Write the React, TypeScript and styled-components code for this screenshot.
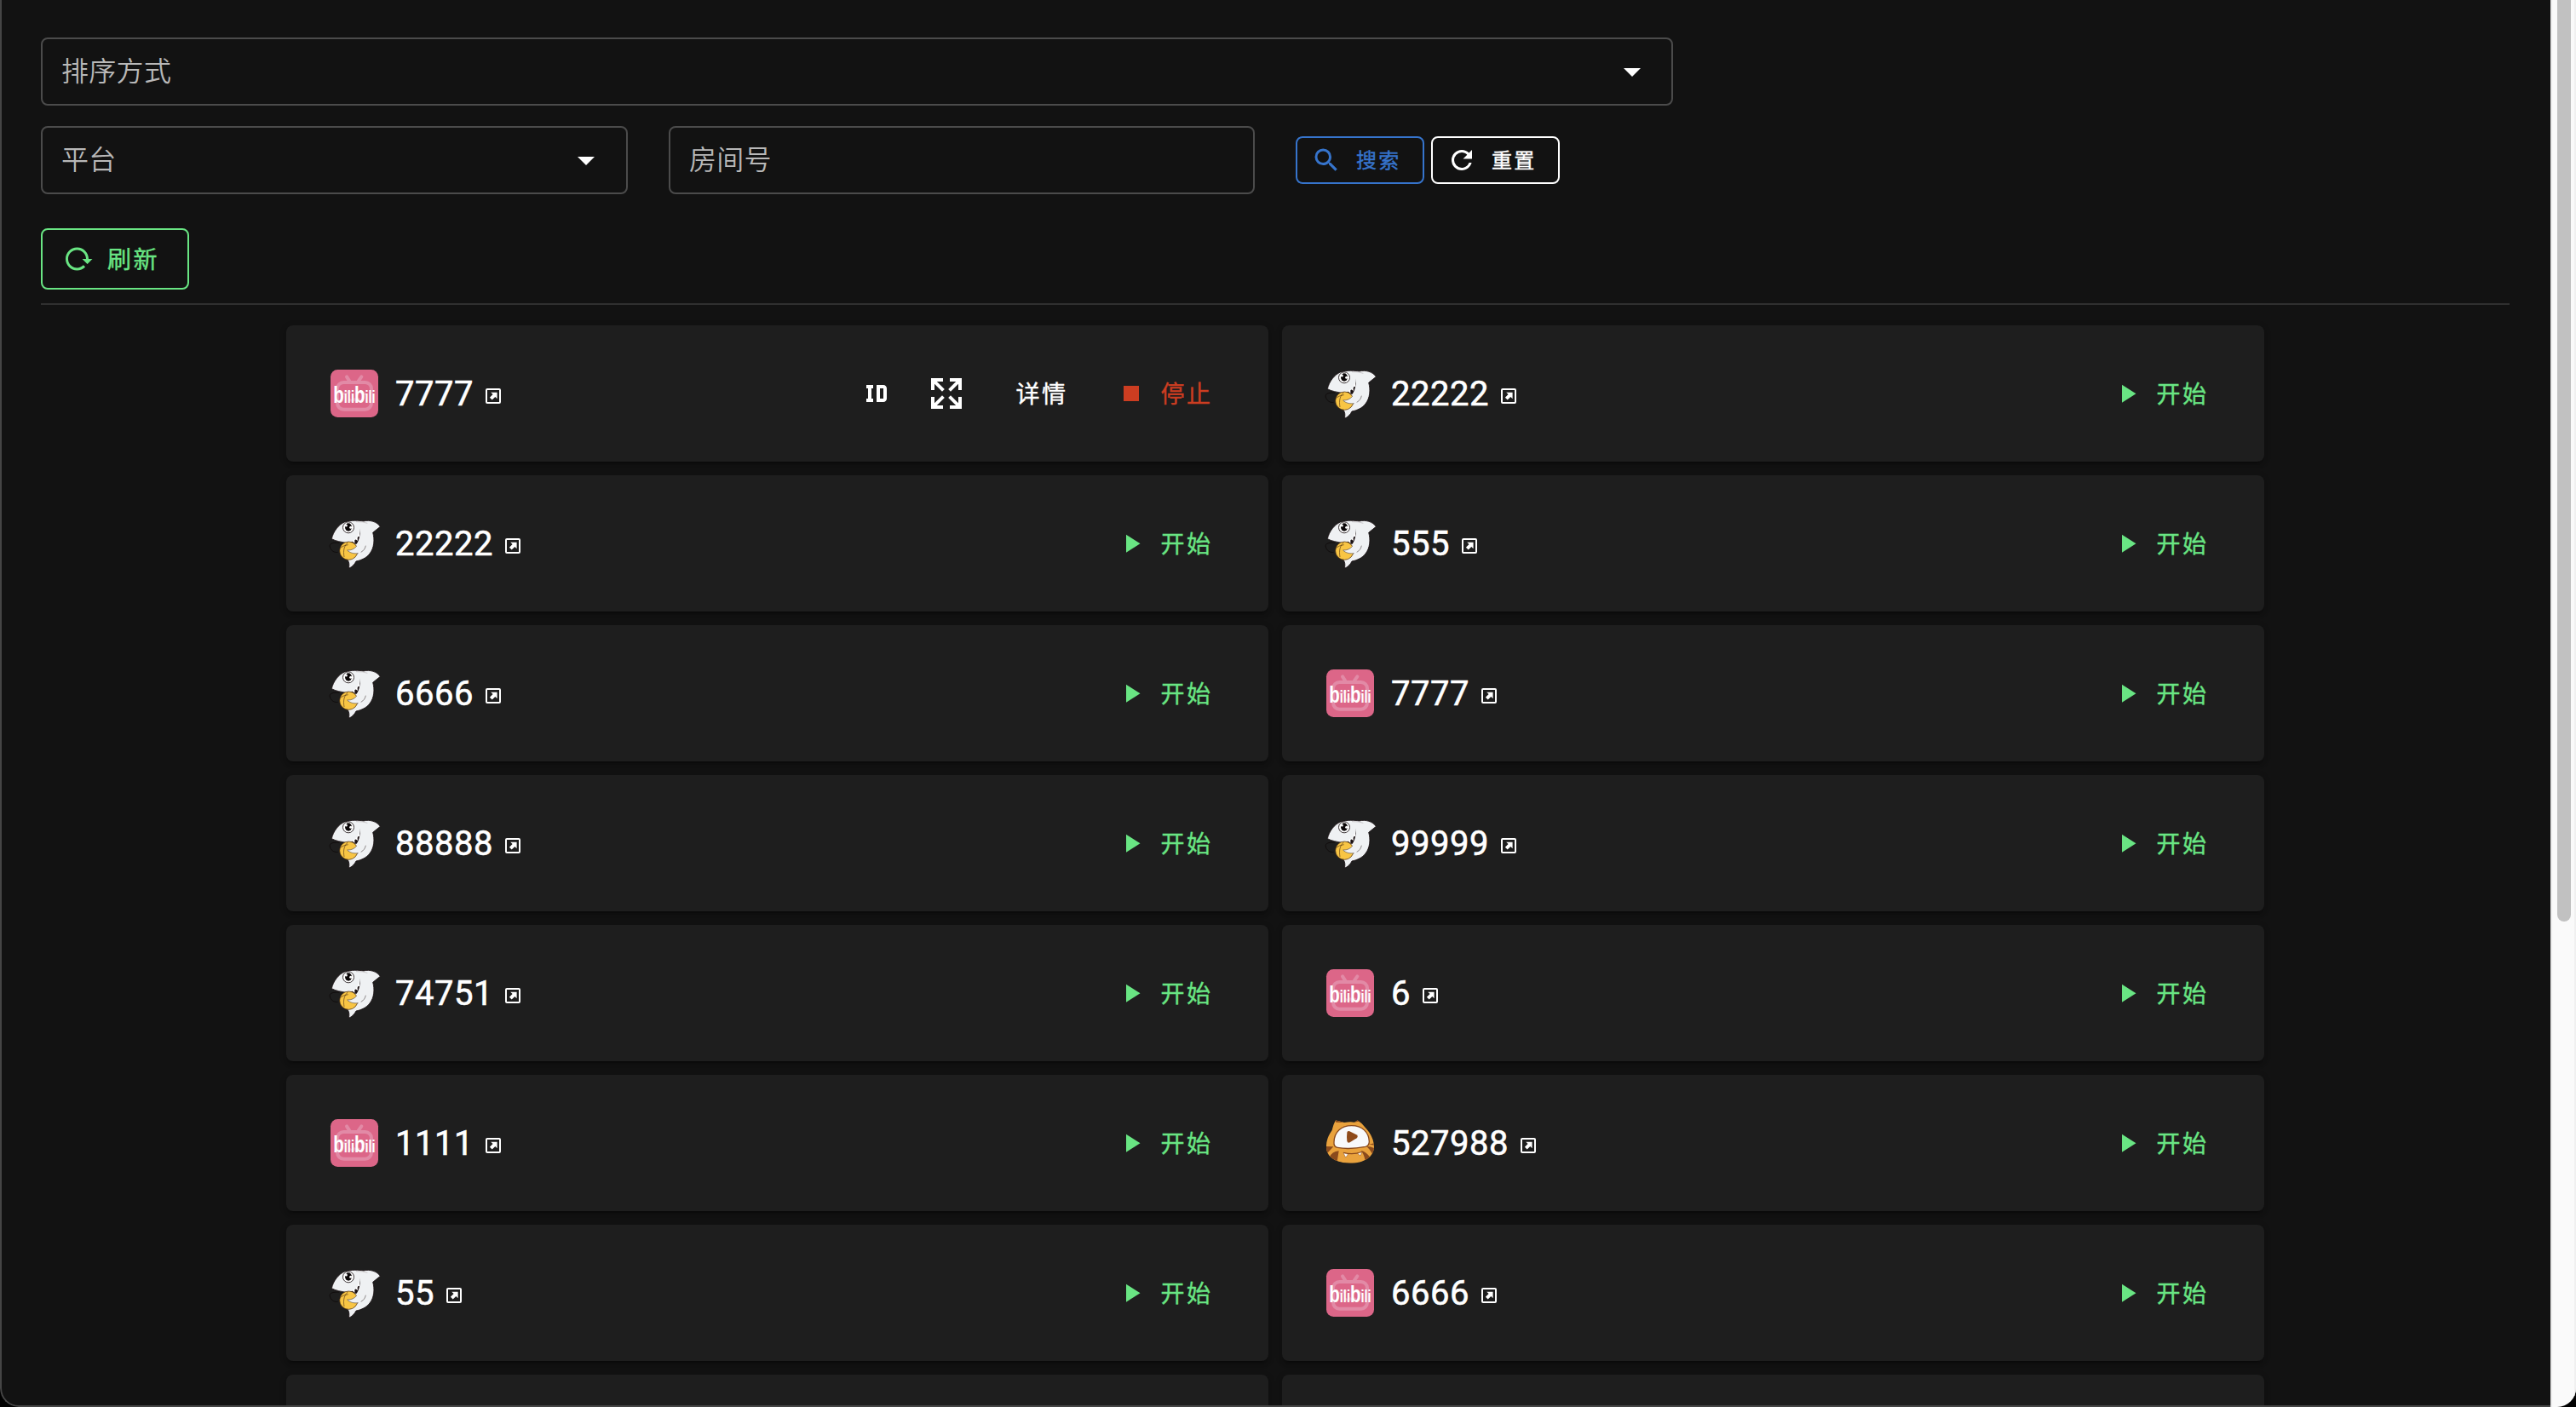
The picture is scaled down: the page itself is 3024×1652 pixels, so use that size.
import React from "react";
import styled, { createGlobalStyle } from "styled-components";

const GlobalStyle = createGlobalStyle`
  html, body, #root { height: 100%; }
  body {
    margin: 0;
    background: #000;
    overflow: hidden;
    font-family: Roboto, "Noto Sans CJK SC", sans-serif;
    color: #fff;
  }
  *, *::before, *::after { box-sizing: border-box; }
`;

const colors = {
  white: "#ffffff",
  blue: "#3674cc",
  green: "#69e583",
  red: "#cc3d21",
};

const icons = {
  magnify:
    "M9.5,3A6.5,6.5 0 0,1 16,9.5C16,11.11 15.41,12.59 14.44,13.73L14.71,14H15.5L20.5,19L19,20.5L14,15.5V14.71L13.73,14.44C12.59,15.41 11.11,16 9.5,16A6.5,6.5 0 0,1 3,9.5A6.5,6.5 0 0,1 9.5,3M9.5,5C7,5 5,7 5,9.5C5,12 7,14 9.5,14C12,14 14,12 14,9.5C14,7 12,5 9.5,5Z",
  refresh:
    "M17.65,6.35C16.2,4.9 14.21,4 12,4A8,8 0 0,0 4,12A8,8 0 0,0 12,20C15.73,20 18.84,17.45 19.73,14H17.65C16.83,16.33 14.61,18 12,18A6,6 0 0,1 6,12A6,6 0 0,1 12,6C13.66,6 15.14,6.69 16.22,7.78L13,11H20V4L17.65,6.35Z",
  reload:
    "M2 12C2 16.97 6.03 21 11 21C13.39 21 15.68 20.06 17.4 18.4L15.9 16.9C14.63 18.25 12.86 19 11 19C4.76 19 1.64 11.46 6.05 7.05C10.46 2.64 18 5.77 18 12H15L19 16H19.1L23 12H20C20 7.03 15.97 3 11 3C6.03 3 2 7.03 2 12Z",
  menuDown: "M7,10L12,15L17,10H7Z",
  identifier:
    "M10 7V9H9V15H10V17H6V15H7V9H6V7H10M16 7C17.11 7 18 7.9 18 9V15C18 16.11 17.11 17 16 17H12V7M16 9H14V15H16V9Z",
  expand:
    "M9.5,13.09L10.91,14.5L6.41,19H10V21H3V14H5V17.59L9.5,13.09M10.91,9.5L9.5,10.91L5,6.41V10H3V3H10V5H6.41L10.91,9.5M14.5,13.09L19,17.59V14H21V21H14V19H17.59L13.09,14.5L14.5,13.09M13.09,9.5L17.59,5H14V3H21V10H19V6.41L14.5,10.91L13.09,9.5Z",
  stop: "M18,18H6V6H18V18Z",
  play: "M8,5.14V19.14L19,12.14L8,5.14Z",
  openBox:
    "M19,3A2,2 0 0,1 21,5V19A2,2 0 0,1 19,21H5A2,2 0 0,1 3,19V5A2,2 0 0,1 5,3H19M19,19V5H5V19H19M16.6,7.7V15.2L14.3,12.9L10.7,16.6L7.9,13.8L11.6,10.1L9.2,7.7H16.6Z",
};

function Icon({ name, size }: { name: keyof typeof icons; size: number }) {
  return (
    <svg width={size} height={size} viewBox="0 0 24 24" fill="currentColor">
      <path d={icons[name]} fillRule="evenodd" />
    </svg>
  );
}

const Window = styled.div`
  display: flex;
  width: 100vw;
  height: 100vh;
  overflow: hidden;
  border-radius: 0 0 22px 22px;
  background: #121212;
`;

const Page = styled.main`
  flex: 1;
  min-width: 0;
  overflow: hidden;
  padding: 44px 48px 0 46px;
  border-left: 2px solid #454545;
  border-bottom: 2px solid #454545;
  border-bottom-left-radius: 22px;
`;

const ScrollTrack = styled.div`
  width: 30px;
  padding: 0 4px 0 6px;
  border-left: 2px solid #e8e8e8;
  border-right: 2px solid #f0f0f0;
  background: #fafafa;
`;

const ScrollThumb = styled.div`
  width: 16px;
  height: 1082px;
  border-radius: 0 0 8px 8px;
  background: #c1c1c1;
`;

const Filters = styled.div`
  display: grid;
  grid-template-columns: 689px 688px auto;
  column-gap: 48px;
  row-gap: 24px;
  align-items: center;
`;

const Field = styled.div<{ $wide?: boolean }>`
  display: flex;
  align-items: center;
  justify-content: space-between;
  height: 80px;
  padding: 0 ${(p) => (p.$wide ? "22px" : "23px")} 0 22px;
  border: 2px solid #4b4b4b;
  border-radius: 8px;
  grid-column: ${(p) => (p.$wide ? "1 / -1" : "auto")};
  width: ${(p) => (p.$wide ? "1916px" : "auto")};

  svg { flex: none; }
`;

const FieldLabel = styled.span`
  font-size: 32px;
  font-weight: 350;
  line-height: 48px;
  letter-spacing: 0.3px;
  color: #b8b8b8;
`;

const ButtonGroup = styled.div`
  display: flex;
  gap: 8px;
`;

const OutlineButton = styled.button<{ $color: string; $small?: boolean }>`
  display: flex;
  align-items: center;
  gap: ${(p) => (p.$small ? "17px" : "16px")};
  width: ${(p) => (p.$small ? "151px" : "174px")};
  height: ${(p) => (p.$small ? "56px" : "72px")};
  padding: 0 0 0 ${(p) => (p.$small ? "16px" : "24px")};
  border: 2px solid ${(p) => p.$color};
  border-radius: 8px;
  background: transparent;
  color: ${(p) => p.$color};
  font: 400 ${(p) => (p.$small ? "24px" : "28px")}/1.3 Roboto, "Noto Sans CJK SC", sans-serif;
  letter-spacing: 0.0893em;
  white-space: nowrap;

  svg { flex: none; }
`;

const ButtonText = styled.span`
  padding-top: 4px;
  -webkit-text-stroke: 0.4px currentColor;
`;

const Toolbar = styled.div`
  padding: 40px 0 16px;
  border-bottom: 2px solid #303030;
`;

const RoomGrid = styled.section`
  display: grid;
  grid-template-columns: 1153px 1153px;
  justify-content: center;
  gap: 16px;
  padding-top: 24px;
  margin: 0 2px;
`;

const Card = styled.article`
  display: flex;
  align-items: center;
  justify-content: space-between;
  height: 160px;
  padding: 0 65.5px 0 52px;
  border-radius: 8px;
  background: #1e1e1e;
  box-shadow: 0 6px 2px -4px rgba(0, 0, 0, 0.2), 0 4px 4px rgba(0, 0, 0, 0.14),
    0 2px 10px rgba(0, 0, 0, 0.12);
`;

const RoomTitle = styled.div`
  display: flex;
  align-items: center;
`;

const Logo = styled.svg`
  width: 56px;
  height: 56px;
  margin-right: 20px;
  overflow: visible;
`;

const RoomNumber = styled.span`
  padding-top: 2px;
  font-size: 40px;
  font-weight: 400;
  line-height: 64px;
  letter-spacing: 0.5px;
  -webkit-text-stroke: 0.6px currentColor;
`;

const OpenLink = styled.span`
  display: flex;
  margin: 6px 0 0 11px;
`;

const Actions = styled.div`
  display: flex;
  align-items: center;
`;

const IconAction = styled.span`
  display: flex;
  margin-right: 34px;
`;

const TextAction = styled.span<{ $color: string; $detail?: boolean }>`
  display: flex;
  align-items: center;
  gap: 16.5px;
  margin: ${(p) => (p.$detail ? "0 56.5px 0 23.5px" : "0")};
  color: ${(p) => p.$color};
  font-size: 28px;
  font-weight: 400;
  line-height: 36px;
  letter-spacing: 2.5px;
`;

function BilibiliLogo() {
  return (
    <Logo viewBox="174 192 168 168">
      <rect x="174" y="192" width="168" height="168" rx="25" fill="#dc6688" />
      <g fill="none" stroke="#e28aa6" strokeWidth="12" strokeLinecap="round">
        <path d="M231 217L241 233M283 217L272 233" />
        <rect x="198" y="237" width="120" height="95" rx="22" />
        <path d="M222 276L242 270M276 270L297 278M242 298Q250 304 258 297Q266 304 275 297" strokeWidth="9" />
      </g>
      <text
        x="184"
        y="309"
        textLength="148"
        lengthAdjust="spacingAndGlyphs"
        fill="#fff"
        fontFamily="Liberation Sans"
        fontWeight="700"
      >
        <tspan fontSize="84">b</tspan>
        <tspan fontSize="60">ili</tspan>
        <tspan fontSize="84">b</tspan>
        <tspan fontSize="60">ili</tspan>
      </text>
    </Logo>
  );
}

function SharkLogo() {
  return (
    <Logo viewBox="174 720 168 168">
      <path d="M204 801C174 801 168 807 173 820C178 831 188 837 200 835" fill="none" stroke="#0d0809" strokeWidth="2.5" />
      <path
        d="M178 788C184 762 202 738 224 729C246 722 274 723 290 726C312 720 338 728 349 745L323 766C330 790 328 820 312 840C300 856 280 864 264 867C258 879 250 887 238 892C241 880 240 870 234 862C222 850 216 830 222 806L230 802C212 799 192 796 178 788Z"
        fill="#eff1f3"
        stroke="#1b1113"
        strokeWidth="2.5"
        strokeLinejoin="round"
      />
      <path d="M264 728Q290 727 304 733" fill="none" stroke="#b9b4b6" strokeWidth="2" />
      <path d="M277 751C280 776 268 794 242 800L250 806L266 806C276 792 280 770 277 751Z" fill="#1b1113" />
      <path d="M276 762L276 780L269 779ZM268 781L270 795L261 789ZM259 788L259 804L250 796Z" fill="#fff" />
      <circle cx="238" cy="830" r="32" fill="#f8c544" stroke="#3c2110" strokeWidth="2" />
      <path d="M208 820Q222 810 236 809M236 800C222 812 218 828 222 852" fill="none" stroke="#5a3a14" strokeWidth="2" />
      <path d="M266 814C258 824 248 829 233 828C242 838 258 841 272 839C288 836 298 822 300 804L280 798Z" fill="#eff1f3" />
      <path d="M266 814C258 823 248 829 233 828C242 838 258 841 272 839M281 835C291 830 296 822 298 812" fill="none" stroke="#5e5455" strokeWidth="2" />
      <circle cx="237" cy="748" r="19.5" fill="#fff" stroke="#1b1113" strokeWidth="2.5" />
      <ellipse cx="237" cy="747" rx="12" ry="14" fill="#0c0809" />
      <circle cx="229" cy="741" r="4.5" fill="#fff" />
      <circle cx="245" cy="748" r="4.5" fill="#fff" />
    </Logo>
  );
}

function TigerLogo() {
  return (
    <Logo viewBox="171 72 168 168">
      <defs>
        <clipPath id="tiger-head">
          <path d="M204 76L234 84Q256 80 270 83L281 76L296 88L313 107C328 124 339 146 339 170C338 205 304 227 255 227C207 227 172 207 171 172C170 148 179 128 191 111C194 99 198 86 204 76Z" />
        </clipPath>
      </defs>
      <g clipPath="url(#tiger-head)">
        <rect x="168" y="72" width="174" height="160" fill="#e9a23d" />
        <path d="M200 74L234 84L205 83ZM270 83L281 74L298 88L284 80Z" fill="#8a4a1d" />
        <path d="M168 168L196 169L172 194ZM182 207Q190 186 215 184L209 222L192 218ZM342 156L322 161L342 164ZM342 176Q330 168 313 168Q326 180 334 196ZM293 182Q314 188 326 208L308 218Q304 196 293 182Z" fill="#8a4a1d" />
        <path d="M231 190Q264 199 296 188" fill="none" stroke="#8a4a1d" strokeWidth="4" />
      </g>
      <path d="M210 172C200 170 197 164 198 153C199 116 224 95 260 95C297 95 321 118 322 151C322 163 318 167 309 169C278 175 236 177 210 172Z" fill="#f8f9fb" stroke="#8a4a1d" strokeWidth="4" />
      <path d="M244 119Q245 112 253 115L277 127Q285 132 278 139L254 154Q246 158 244 149Q242 134 244 119Z" fill="#8f4b1b" />
      <path d="M231 191L248 196L239 207ZM281 193L296 188L291 201Z" fill="#fff" stroke="#8a4a1d" strokeWidth="1.5" />
    </Logo>
  );
}

type Platform = "bilibili" | "shark" | "tiger";

const logos: Record<Platform, () => React.JSX.Element> = {
  bilibili: BilibiliLogo,
  shark: SharkLogo,
  tiger: TigerLogo,
};

const rooms: { platform: Platform; id: string; running?: boolean }[] = [
  { platform: "bilibili", id: "7777", running: true },
  { platform: "shark", id: "22222" },
  { platform: "shark", id: "22222" },
  { platform: "shark", id: "555" },
  { platform: "shark", id: "6666" },
  { platform: "bilibili", id: "7777" },
  { platform: "shark", id: "88888" },
  { platform: "shark", id: "99999" },
  { platform: "shark", id: "74751" },
  { platform: "bilibili", id: "6" },
  { platform: "bilibili", id: "1111" },
  { platform: "tiger", id: "527988" },
  { platform: "shark", id: "55" },
  { platform: "bilibili", id: "6666" },
];

function RoomCard({ platform, id, running }: (typeof rooms)[number]) {
  const PlatformLogo = logos[platform];
  return (
    <Card>
      <RoomTitle>
        <PlatformLogo />
        <RoomNumber>{id}</RoomNumber>
        <OpenLink>
          <Icon name="openBox" size={24} />
        </OpenLink>
      </RoomTitle>
      <Actions>
        {running ? (
          <>
            <IconAction>
              <Icon name="identifier" size={48} />
            </IconAction>
            <IconAction>
              <Icon name="expand" size={48} />
            </IconAction>
            <TextAction $color={colors.white} $detail>
              <ButtonText>详情</ButtonText>
            </TextAction>
            <TextAction $color={colors.red}>
              <Icon name="stop" size={36} />
              <ButtonText>停止</ButtonText>
            </TextAction>
          </>
        ) : (
          <TextAction $color={colors.green}>
            <Icon name="play" size={36} />
            <ButtonText>开始</ButtonText>
          </TextAction>
        )}
      </Actions>
    </Card>
  );
}

export default function App() {
  return (
    <>
      <GlobalStyle />
      <Window>
        <Page>
          <Filters>
            <Field $wide>
              <FieldLabel>排序方式</FieldLabel>
              <Icon name="menuDown" size={48} />
            </Field>
            <Field>
              <FieldLabel>平台</FieldLabel>
              <Icon name="menuDown" size={48} />
            </Field>
            <Field>
              <FieldLabel>房间号</FieldLabel>
            </Field>
            <ButtonGroup>
              <OutlineButton $color={colors.blue} $small>
                <Icon name="magnify" size={36} />
                <ButtonText>搜索</ButtonText>
              </OutlineButton>
              <OutlineButton $color={colors.white} $small>
                <Icon name="refresh" size={36} />
                <ButtonText>重置</ButtonText>
              </OutlineButton>
            </ButtonGroup>
          </Filters>
          <Toolbar>
            <OutlineButton $color={colors.green}>
              <Icon name="reload" size={36} />
              <ButtonText>刷新</ButtonText>
            </OutlineButton>
          </Toolbar>
          <RoomGrid>
            {rooms.map((room, i) => (
              <RoomCard key={i} {...room} />
            ))}
            <Card />
            <Card />
          </RoomGrid>
        </Page>
        <ScrollTrack>
          <ScrollThumb />
        </ScrollTrack>
      </Window>
    </>
  );
}
